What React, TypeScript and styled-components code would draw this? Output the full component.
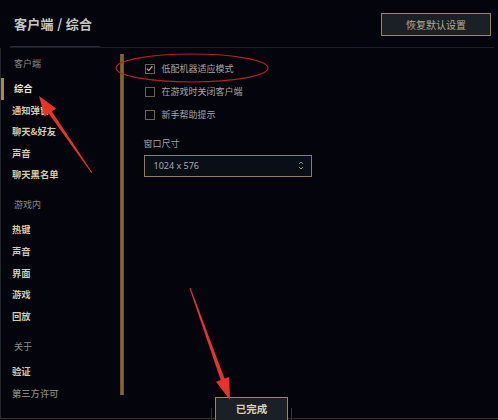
import React from 'react';
import styled, { createGlobalStyle } from 'styled-components';

const GlobalStyle = createGlobalStyle`
  html, body {
    margin: 0;
    padding: 0;
    background: #02030b;
  }
  body {
    font-family: "Noto Sans CJK SC", "Noto Sans", sans-serif;
  }
`;

const GOLD = '#8f7c52';

const Window = styled.div`
  position: relative;
  width: 498px;
  height: 420px;
  box-sizing: border-box;
  padding-bottom: 1px;
  background: #03040c;
  display: flex;
  flex-direction: column;
  overflow: hidden;
`;

const Header = styled.header`
  height: 47px;
  margin: 0 4px 0 10px;
  padding: 0 3px 0 4px;
  display: flex;
  align-items: center;
  justify-content: space-between;
  border-bottom: 1px solid #1a1f2b;
  background-image: linear-gradient(#262c3a, #262c3a);
  background-size: 90px 1px;
  background-position: left bottom;
  background-repeat: no-repeat;
`;

const Title = styled.h1`
  margin: 0;
  font-size: 13px;
  font-weight: 700;
  color: #c4c4c4;
  letter-spacing: 0.3px;
`;

const ResetButton = styled.button`
  width: 110px;
  height: 23px;
  margin-top: 2px;
  border: 1px solid #9a8658;
  box-shadow: inset 0 0 0 1px #221e16;
  background: #1b1f26;
  color: #b6ab8e;
  font-family: inherit;
  font-size: 10px;
  padding: 0;
`;

const Body = styled.div`
  flex: 1;
  display: flex;
  border-bottom: 1px solid #3a3226;
  min-height: 0;
`;

const Sidebar = styled.nav`
  width: 120px;
  box-sizing: border-box;
  padding-top: 6px;
  border-left: 1px solid #24242c;
  display: flex;
  flex-direction: column;
  gap: 9.5px;
`;

const Section = styled.div`
  display: flex;
  flex-direction: column;
`;

const SectionTitle = styled.div`
  height: 20px;
  line-height: 20px;
  margin-bottom: 4px;
  padding-left: 13px;
  font-size: 9px;
  color: #8a8a8a;
`;

const NavItem = styled.div<{ $active?: boolean; $dim?: boolean }>`
  position: relative;
  height: 21.6px;
  line-height: 21.6px;
  padding-left: ${(p) => (p.$active ? '13px' : '11px')};
  font-size: 9.3px;
  font-weight: ${(p) => (p.$dim ? 500 : 700)};
  color: ${(p) => (p.$active ? '#efe6d2' : p.$dim ? '#85857c' : '#d6c9a4')};

  &::before {
    content: '';
    display: ${(p) => (p.$active ? 'block' : 'none')};
    position: absolute;
    left: 0;
    top: 0;
    bottom: 0;
    width: 2.5px;
    background: #a8894a;
  }
`;

const Scrollbar = styled.div`
  width: 3.5px;
  margin: 6px 0 23px 0;
  background: linear-gradient(90deg, #6a4e22, #8c6c34, #6a4e22);
`;

const Content = styled.section`
  flex: 1;
  padding: 9px 0 0 20px;
  display: flex;
  flex-direction: column;
`;

const CheckRow = styled.label`
  height: 23px;
  display: flex;
  align-items: center;
  gap: 7px;
  padding-left: 1px;
  font-size: 9px;
  color: #a6a6a6;
`;

const Box = styled.span<{ $checked?: boolean }>`
  width: 8px;
  height: 8px;
  border: 1px solid #6f6146;
  display: flex;
  align-items: center;
  justify-content: center;
  color: #c9a862;
`;

const FieldLabel = styled.div`
  margin-top: 9.5px;
  line-height: 16px;
  font-size: 9px;
  color: #a0a0a0;
`;

const Select = styled.div`
  margin-top: 3px;
  width: 168px;
  height: 22px;
  box-sizing: border-box;
  border: 1px solid ${GOLD};
  background: #0a0e16;
  display: flex;
  align-items: center;
  justify-content: space-between;
  padding: 0 7px 0 9px;
  font-family: "Noto Sans", "Liberation Sans", sans-serif;
  font-size: 9px;
  color: #a9a9a9;
`;

const DoneButton = styled.button`
  position: absolute;
  left: 215px;
  bottom: -2px;
  width: 73px;
  height: 25px;
  border: 1px solid #9a8658;
  box-shadow: inset 0 0 0 1px #221e16;
  background: #1b1f26;
  color: #d8d0b6;
  font-family: inherit;
  font-size: 10.5px;
  font-weight: 700;
  padding: 0 0 2px;

  &::before,
  &::after {
    content: '';
    position: absolute;
    top: 10px;
    height: 14px;
    width: 1px;
    background: #34343a;
  }
  &::before { left: -5px; }
  &::after { right: -5px; }
`;

const Overlay = styled.svg`
  position: absolute;
  inset: 0;
  pointer-events: none;
`;

const clientItems = ['综合', '通知弹窗', '聊天&好友', '声音', '聊天黑名单'];
const gameItems = ['热键', '声音', '界面', '游戏', '回放'];
const checks = [
  { label: '低配机器适应模式', checked: true },
  { label: '在游戏时关闭客户端', checked: false },
  { label: '新手帮助提示', checked: false },
];

const Check = () => (
  <svg width="7" height="7" viewBox="0 0 7 7">
    <path d="M0.8 3.6 L2.8 5.6 L6.3 1.2" fill="none" stroke="currentColor" strokeWidth="1.2" />
  </svg>
);

const Chevrons = () => (
  <svg width="6" height="11" viewBox="0 0 6 11">
    <path d="M1 4 L3 2 L5 4" fill="none" stroke="#9c8c68" strokeWidth="1" />
    <path d="M1 7 L3 9 L5 7" fill="none" stroke="#9c8c68" strokeWidth="1" />
  </svg>
);

export default function App() {
  return (
    <>
      <GlobalStyle />
      <Window>
        <Header>
          <Title>客户端 / 综合</Title>
          <ResetButton>恢复默认设置</ResetButton>
        </Header>
        <Body>
          <Sidebar>
            <Section>
              <SectionTitle>客户端</SectionTitle>
              {clientItems.map((t, i) => (
                <NavItem key={t} $active={i === 0}>
                  {t}
                </NavItem>
              ))}
            </Section>
            <Section>
              <SectionTitle>游戏内</SectionTitle>
              {gameItems.map((t) => (
                <NavItem key={t}>{t}</NavItem>
              ))}
            </Section>
            <Section>
              <SectionTitle>关于</SectionTitle>
              <NavItem>验证</NavItem>
              <NavItem $dim>第三方许可</NavItem>
            </Section>
          </Sidebar>
          <Scrollbar />
          <Content>
            {checks.map((c) => (
              <CheckRow key={c.label}>
                <Box $checked={c.checked}>{c.checked && <Check />}</Box>
                {c.label}
              </CheckRow>
            ))}
            <FieldLabel>窗口尺寸</FieldLabel>
            <Select>
              <span>1024 x 576</span>
              <Chevrons />
            </Select>
          </Content>
        </Body>
        <DoneButton>已完成</DoneButton>
        <Overlay width="498" height="420" viewBox="0 0 498 420">
          <ellipse cx="192" cy="68" rx="76" ry="14" fill="none" stroke="#b8202a" strokeWidth="1.2" />
          <polygon
            fill="#e8322b"
            points="39,96 56.1,108.5 51.9,111.4 92.4,172.7 91.6,173.3 48.7,113.6 44.5,116.5"
          />
          <polygon
            fill="#e8322b"
            points="230,400 229.2,376.9 224.5,378.6 190.5,287.8 189.5,288.2 220.7,380 216,381.7"
          />
        </Overlay>
      </Window>
    </>
  );
}
